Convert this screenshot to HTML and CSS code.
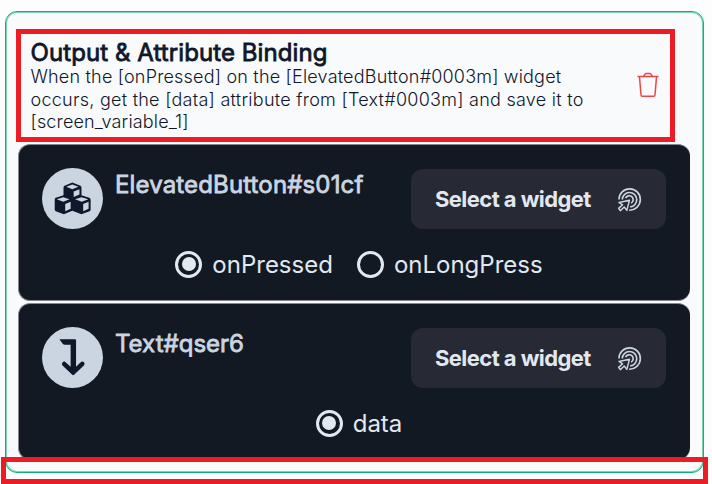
FILE: index.html
```html
<!DOCTYPE html>
<html lang="en">
<head>
<meta charset="utf-8">
<title>Output &amp; Attribute Binding</title>
<link rel="stylesheet" href="styles.css">
</head>
<body>
<svg class="defs" aria-hidden="true">
  <symbol id="target" viewBox="652 109 74 76">
    <g fill="none" stroke="currentColor" stroke-width="5" stroke-linejoin="round">
      <path d="M657 147A32.500 32.500 0 1 1 688 179.500"/>
      <path d="M667 147A22 22 0 1 1 691 169.500"/>
      <path d="M677 143A12 12 0 1 1 694 158"/>
      <path stroke-width="4.500" d="M689 149L657 156L668 163L656 174L661 181L673 170L681 180Z"/>
    </g>
  </symbol>
</svg>
<main class="panel">
  <header class="heading">
    <div class="copy">
      <h1>Output &amp; Attribute Binding</h1>
      <p><span class="l1">When the [onPressed] on the [ElevatedButton#0003m] widget</span><br><span class="l2">occurs, get the [data] attribute from [Text#0003m] and save it to</span><br><span class="l3">[screen_variable_1]</span></p>
    </div>
    <svg class="trash" viewBox="0 0 22 26"><path d="M.500 4.500H21.500M2.500 5L4 23Q4.100 24.200 5.300 24.200H16.700Q17.900 24.200 18 23L19.500 5M6.500 4.500L8 2.200Q8.400 1.500 9.200 1.500H12.800Q13.600 1.500 14 2.200L15.500 4.500" fill="none" stroke="currentColor" stroke-width="1.500"/></svg>
  </header>
  <section class="card">
    <div class="row">
      <svg class="avatar" viewBox="7.500 10.500 180 180">
        <circle class="disc" cx="97.500" cy="100.500" r="90"/>
        <g class="ink">
          <path d="M97 53L121 63Q124 65 124 69V91L147 98Q151 100 151 104V134Q151 137 148 138L124 147L97 137L72 147L48 138Q45 137 45 133V104Q45 100 48 98L71 91V69Q71 65 74 63Z"/>
        </g>
        <g class="disc"><path d="M97 59L115 66L97 73L79 66ZM101 80L118 73V89L101 96ZM70 97L89 103L70 110L51 103ZM76 117L92 110V131L76 138ZM124 97L144 103L125 110L105 103ZM129 117L145 110V131L129 138Z"/></g>
      </svg>
      <h2 class="name-a">ElevatedButton#s01cf</h2>
      <button class="select"><span>Select a widget</span><svg class="target"><use href="#target"/></svg></button>
    </div>
    <div class="options">
      <label><i class="radio on"></i><span>onPressed</span></label>
      <label><i class="radio"></i><span>onLongPress</span></label>
    </div>
  </section>
  <section class="card">
    <div class="row">
      <svg class="avatar" viewBox="97.500 82.500 180 180">
        <circle class="disc" cx="187.500" cy="172.500" r="90"/>
        <path class="ink" d="M149 119H195Q198 119 198 122V200L211 187Q217 181 222 187Q225 191 221 196L193 223Q190 227 186 223L158 196Q154 191 158 187Q163 181 168 187L182 200V135H165Q161 135 158 131Z"/>
      </svg>
      <h2>Text#qser6</h2>
      <button class="select"><span>Select a widget</span><svg class="target"><use href="#target"/></svg></button>
    </div>
    <div class="options">
      <label><i class="radio on"></i><span>data</span></label>
    </div>
  </section>
</main>
<div class="marker marker-top"></div>
<div class="marker marker-bottom"></div>
</body>
</html>
```
FILE: styles.css
```css
* { box-sizing: border-box; }
body {
  margin: 0;
  width: 712px;
  height: 484px;
  padding: 11px 0 0 5px;
  overflow: hidden;
  position: relative;
  background: #fdfdfe;
  color: #0f172a;
  font-family: Inter, sans-serif;
}
.defs { position: absolute; width: 0; height: 0; }
.panel {
  width: 699px;
  height: 462px;
  padding: 0 12px;
  border: 1px solid #10b178;
  border-radius: 12px;
  background: #f9fafc;
  box-shadow: inset 0 0 0 1px #7dd3b3;
}
.heading {
  display: flex;
  justify-content: space-between;
  height: 132px;
  padding: 26px 32px 0 12.5px;
}
h1, h2, p { margin: 0; font-weight: 400; white-space: nowrap; }
h1 {
  font-size: 24px;
  line-height: 30px;
  letter-spacing: 0.08px;
  -webkit-text-stroke: 0.8px;
}
p {
  font-size: 18px;
  line-height: 22.7px;
  font-weight: 300;
  margin-top: -2px;
}
.l1 { letter-spacing: 0.19px; }
.l2 { letter-spacing: 0.26px; }
.l3 { letter-spacing: 0.15px; }
.trash { width: 22px; height: 26px; margin-top: 34px; color: #ef4444; }
.card {
  display: flex;
  flex-direction: column;
  width: 672px;
  height: 157px;
  padding: 23px 24px 0 23px;
  margin-bottom: 2px;
  border: 1px solid #858892;
  border-right: 0;
  border-radius: 12px;
  background: #131923;
}
.row { display: flex; height: 61px; }
.avatar { flex: none; width: 61px; height: 61px; }
.disc { fill: #cbd5e1; }
.ink { fill: #0f172a; }
h2 {
  margin-left: 12px;
  color: #cbd5e1;
  font-size: 24px;
  line-height: 33px;
  -webkit-text-stroke: 0.8px;
}
.name-a { letter-spacing: 0.14px; }
.select {
  display: flex;
  align-items: center;
  justify-content: space-between;
  width: 255px;
  height: 60px;
  margin: 0.5px 0 0 auto;
  padding: 1px 24px 0;
  border: 0;
  border-radius: 12px;
  background: #272a35;
  color: #e2e8f0;
  font: 700 22px Inter, sans-serif;
  letter-spacing: -0.57px;
  white-space: nowrap;
}
.target { width: 25px; height: 25px; color: #cbd5e1; }
.options {
  display: flex;
  justify-content: center;
  gap: 24px;
  margin-top: 18px;
  padding-left: 10px;
  color: #e2e8f0;
  font-size: 24px;
  line-height: 34px;
}
label { display: flex; align-items: center; gap: 10px; }
label span { padding-top: 1px; line-height: 33px; }
.radio {
  display: grid;
  place-items: center;
  width: 27px;
  height: 27px;
  border: 3px solid #e2e8f0;
  border-radius: 50%;
}
.on::after {
  content: "";
  width: 14px;
  height: 14px;
  border-radius: 50%;
  background: #e2e8f0;
}
.marker { position: absolute; border: 5px solid #ed1c24; }
.marker-top { left: 16px; top: 29px; width: 659px; height: 113px; }
.marker-bottom { left: 1px; top: 457px; width: 707px; height: 27px; }
```
